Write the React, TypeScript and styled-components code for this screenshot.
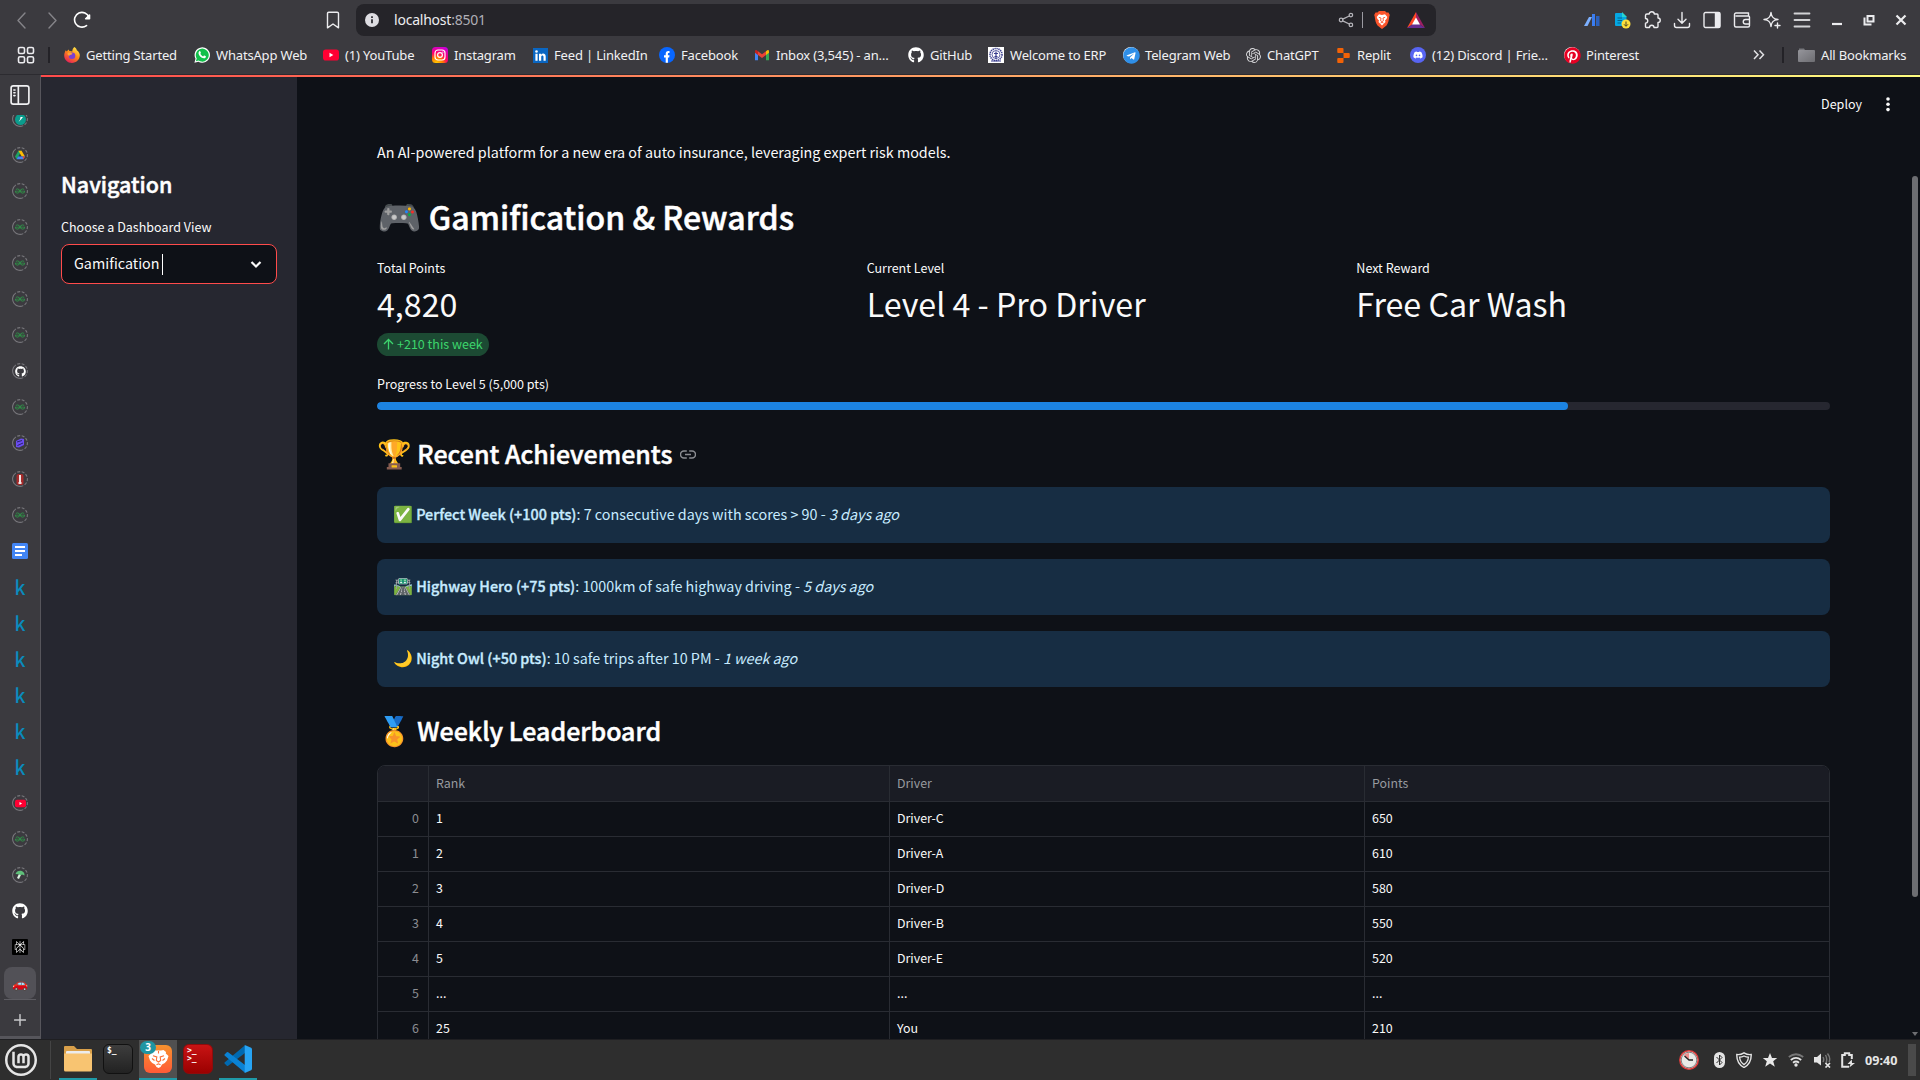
import React, { ReactNode } from 'react';
import styled, { createGlobalStyle, css } from 'styled-components';
import { SiGeeksforgeeks, SiPerplexity, SiReplit, SiOpenai, SiLinuxmint } from 'react-icons/si';
import { FaTelegram, FaDiscord, FaPinterest, FaGithub } from 'react-icons/fa';

const source = `'Noto Sans CJK SC', 'Noto Color Emoji', sans-serif`;
const ui = `'Noto Sans', sans-serif`;

const Global = createGlobalStyle`
  * { box-sizing: border-box; }
  body { margin: 0; background: #0e1117; overflow: hidden; }
  svg { display: block; flex: none; }
`;

/* ---------- shell ---------- */
const Screen = styled.div`
  width: 1920px;
  height: 1080px;
  display: grid;
  grid-template-rows: 75px 964px 41px;
  overflow: hidden;
  font-family: ${ui};
  color: #fff;
`;
const Body = styled.div`
  display: grid;
  grid-template-columns: 41px 1fr;
  min-height: 0;
`;
const Page = styled.div`
  display: grid;
  grid-template-rows: 2px 1fr;
  min-height: 0;
  background: #0e1117;
  font-family: ${source};
`;
const Decoration = styled.div`
  background: linear-gradient(90deg, #ff4b4b, #fffd80);
`;
const PageColumns = styled.div`
  display: grid;
  grid-template-columns: 256px 1fr 10px;
  min-height: 0;
`;

/* ---------- browser chrome ---------- */
const Chrome = styled.header`
  background: #3b3a3f;
  border-bottom: 1px solid #2c2b30;
  display: grid;
  grid-template-rows: 40px 30px;
`;
const NavBar = styled.div`
  display: flex;
  align-items: center;
  padding: 0 3px 0 7px;
`;
const IconCell = styled.div<{ $w?: number }>`
  width: ${p => p.$w ?? 30}px;
  height: 32px;
  display: flex;
  align-items: center;
  justify-content: center;
`;
const NavButtons = styled.div`
  display: flex;
  width: 311px;
`;
const AddressBar = styled.div`
  display: flex;
  align-items: center;
  width: 1080px;
  height: 32px;
  margin: 0 141px 0 8px;
  padding: 0 11px 0 9px;
  border-radius: 8px;
  background: #252429;
`;
const Address = styled.div`
  flex: 1;
  margin-left: 15px;
  padding-bottom: 1px;
  font-size: 14px;
  letter-spacing: -0.22px;
  color: #ededf0;
  span { color: #b0afb6; }
`;
const ShieldDivider = styled.i`
  width: 1px;
  height: 16px;
  margin: 0 11px 0 8px;
  background: #9b9aa1;
`;
const Extensions = styled.div`display: flex;`;
const WindowButtons = styled.div`display: flex; margin-left: 4px;`;

const BookmarkBar = styled.div`
  display: flex;
  align-items: center;
  padding: 0 14px 0 17px;
  font-size: 13px;
  letter-spacing: -0.17px;
  color: #f1f1f3;
  white-space: nowrap;
`;
const Bookmark = styled.div<{ $w: number }>`
  width: ${p => p.$w}px;
  display: flex;
  align-items: center;
  gap: 6px;
`;
const Separator = styled.i<{ $left: number; $right: number }>`
  width: 2px;
  height: 16px;
  margin: 0 ${p => p.$right}px 0 ${p => p.$left}px;
  background: #232227;
`;
const Grow = styled.div`flex: 1;`;

/* ---------- vertical tabs ---------- */
const TabStrip = styled.nav`
  display: flex;
  flex-direction: column;
  background: #3b3a3f;
  border-right: 1px solid #56555b;
  min-height: 0;
`;
const TabToggle = styled.div`
  height: 40px;
  display: flex;
  align-items: center;
  justify-content: center;
`;
const TabList = styled.div`
  flex: none;
  height: 884px;
  overflow: hidden;
`;
const TabStack = styled.div`margin-top: -14px;`;
const Tab = styled.div`
  height: 36px;
  display: flex;
  align-items: center;
  justify-content: center;
`;
const TabChip = styled.div`
  width: 32px;
  height: 32px;
  padding-bottom: 2px;
  border-radius: 8px;
  background: #525157;
  display: flex;
  align-items: center;
  justify-content: center;
  font: 13px ${source};
`;
const NewTab = styled.div`
  flex: 1;
  margin: 0 4px;
  padding-top: 3px;
  border-top: 1px solid #5d5c62;
  display: flex;
  align-items: center;
  justify-content: center;
`;
const StripFoot = styled.div`height: 3px; background: #56555b;`;
const RingBox = styled.div`
  display: grid;
  place-items: center;
  & > * { grid-area: 1 / 1; }
`;
const KMark = styled.span`
  font: 500 19px/20px ${source};
  color: #0a8bbd;
`;

/* ---------- app sidebar ---------- */
const Sidebar = styled.aside`
  background: #262730;
  padding: 92px 20px 0;
  display: flex;
  flex-direction: column;
`;
const heavy = css`
  font-weight: 500;
  -webkit-text-stroke: 0.5px currentColor;
`;
const SideTitle = styled.h2`
  margin: 0;
  font-size: 21.5px;
  line-height: 30px;
  ${heavy}
`;
const FieldLabel = styled.label`
  margin-top: 18px;
  font-size: 12.53px;
  line-height: 20px;
  color: #fafafa;
`;
const Select = styled.div`
  margin-top: 7px;
  height: 40px;
  padding: 0 12px;
  display: flex;
  align-items: center;
  border: 1px solid #ff4b4b;
  border-radius: 8px;
  background: #0e1117;
  font-size: 14.33px;
  line-height: 22px;
  color: #fafafa;
`;
const SelectValue = styled.span`padding-bottom: 2px;`;
const Caret = styled.i`
  width: 1px;
  height: 21px;
  margin-left: 2px;
  background: #fff;
`;

/* ---------- app content ---------- */
const Content = styled.main`
  position: relative;
  min-height: 0;
  overflow: hidden;
  padding: 63px 80px 0 80px;
  color: #fafafa;
`;
const AppToolbar = styled.div`
  position: absolute;
  top: 16px;
  right: 12px;
  display: flex;
  align-items: center;
  gap: 16px;
  font-size: 12.53px;
  line-height: 22px;
`;
const Intro = styled.p`
  margin: 0;
  font-size: 14.33px;
  line-height: 24px;
`;
const Title = styled.h2`
  margin: 30px 0 20px;
  font-size: 32.05px;
  line-height: 44px;
  color: #fff;
  ${heavy}
`;
const Subtitle = styled.h3<{ $top: number; $bottom: number }>`
  margin: ${p => p.$top}px 0 ${p => p.$bottom}px;
  height: 36px;
  display: flex;
  align-items: center;
  gap: 8px;
  font-size: 24.95px;
  line-height: 36px;
  color: #fff;
  ${heavy}
`;
const Emoji = styled.span`
  font-size: 1.118em;
  line-height: 0;
  -webkit-text-stroke: 0;
`;
const Metrics = styled.div`
  display: grid;
  grid-template-columns: repeat(3, 1fr);
  gap: 16px;
  height: 98px;
`;
const MetricLabel = styled.div`
  font-size: 12.53px;
  line-height: 20px;
`;
const MetricValue = styled.div`
  margin-top: 3px;
  font-size: 32.2px;
  line-height: 44px;
`;
const Delta = styled.div`
  margin-top: 8px;
  width: 112px;
  height: 23px;
  padding: 0 0 2px 6px;
  border-radius: 12px;
  display: flex;
  align-items: center;
  gap: 3px;
  background: #1c4a33;
  color: #3dd56d;
  font-size: 12.53px;
  line-height: 20px;
  white-space: nowrap;
`;
const ProgressLabel = styled.div`
  margin-top: 18px;
  font-size: 12.53px;
  line-height: 20px;
`;
const Track = styled.div`
  margin-top: 8px;
  height: 8px;
  border-radius: 4px;
  background: #262730;
  overflow: hidden;
`;
const Fill = styled.div<{ $value: number }>`
  width: ${p => p.$value}%;
  height: 100%;
  border-radius: 4px;
  background: #1c83e1;
`;
const Alerts = styled.div`
  display: flex;
  flex-direction: column;
  gap: 16px;
`;
const Alert = styled.div`
  height: 56px;
  padding: 15px 16px;
  border-radius: 8px;
  background: #172d43;
  color: #c7ebff;
  font-size: 14.33px;
  line-height: 24px;
  b { font-weight: 500; -webkit-text-stroke: 0.35px currentColor; letter-spacing: 0.03px; }
`;
const Grid = styled.div`
  border: 1px solid #292c33;
  border-radius: 8px 8px 0 0;
  overflow: hidden;
  font-size: 12.4px;
`;
const Row = styled.div<{ $head?: boolean }>`
  display: grid;
  grid-template-columns: 51px 461px 475px 1fr;
  height: ${p => (p.$head ? 36 : 35)}px;
  line-height: ${p => (p.$head ? 34 : 32)}px;
  border-bottom: 1px solid #292c33;
  background: ${p => (p.$head ? '#1a1c24' : 'transparent')};
  color: ${p => (p.$head ? '#989a9f' : '#fafafa')};
`;
const Cell = styled.div<{ $index?: boolean }>`
  padding: 0 9px 0 7px;
  border-right: 1px solid #292c33;
  ${p => p.$index && css`text-align: right; color: #8b8d92;`}
  &:last-child { border-right: 0; }
`;
const ScrollGutter = styled.div`
  display: flex;
  flex-direction: column;
  justify-content: space-between;
  padding: 99px 2px 3px;
`;
const Thumb = styled.div`
  width: 6px;
  height: 721px;
  border-radius: 3px;
  background: #6d6e72;
`;

/* ---------- desktop panel ---------- */
const Taskbar = styled.footer`
  display: flex;
  align-items: center;
  background: #2e2e2e;
  border-top: 1px solid #1f1f22;
  padding: 0 4px 0 4px;
`;
const PanelDivider = styled.i`
  width: 1px;
  height: 38px;
  margin: 0 8px 0 12px;
  background: #444;
`;
const Launcher = styled.div<{ $open?: boolean; $active?: boolean }>`
  width: 38px;
  height: 40px;
  margin-right: 2px;
  display: flex;
  align-items: center;
  justify-content: center;
  position: relative;
  background: ${p => (p.$active ? '#505050' : 'transparent')};
  border-bottom: 2px solid ${p => (p.$open ? '#1f9aa8' : 'transparent')};
`;
const CountBadge = styled.span`
  position: absolute;
  left: 1px;
  top: 1px;
  width: 16px;
  height: 13px;
  border-radius: 7px;
  background: #1f95a3;
  font: 700 10px/13px ${ui};
  text-align: center;
`;
const Terminal = styled.div<{ $red?: boolean }>`
  width: 30px;
  height: 30px;
  padding: 2px 3px;
  border-radius: 6px;
  border: 1px solid ${p => (p.$red ? '#8f0b0b' : '#111')};
  background: ${p => (p.$red ? 'linear-gradient(#c81414, #9b0000)' : 'linear-gradient(#3d3d3d, #222)')};
  font: 700 8px/8px 'DejaVu Sans Mono', monospace;
  color: #fff;
  white-space: pre;
`;
const BraveTile = styled.div`
  width: 28px;
  height: 28px;
  border-radius: 6px;
  display: flex;
  align-items: center;
  justify-content: center;
  background: linear-gradient(#f7922e, #ff5a36);
`;
const Tray = styled.div`
  display: flex;
  align-items: center;
`;
const TrayItem = styled.div<{ $w: number }>`
  width: ${p => p.$w}px;
  display: flex;
  justify-content: center;
`;
const Clock = styled.div`
  width: 47px;
  padding-left: 4px;
  font-size: 12.6px;
  font-weight: 700;
  color: #e6e6e6;
`;
const ShowDesktop = styled.div`
  width: 8px;
  height: 32px;
  background: #4a4a4a;
`;

/* ---------- drawings ---------- */
type LineProps = { size?: number; color?: string; width?: number; children: ReactNode };
const Line = ({ size = 18, color = '#ececef', width = 1.4, children }: LineProps) => (
  <svg width={size} height={size} viewBox="0 0 18 18" fill="none" stroke={color} strokeWidth={width} strokeLinecap="round" strokeLinejoin="round">{children}</svg>
);

const Firefox = () => (
  <svg width="16" height="16" viewBox="0 0 16 16">
    <defs>
      <linearGradient id="ff" x1="0.8" y1="0" x2="0.2" y2="1"><stop offset="0" stopColor="#fff04d" /><stop offset=".45" stopColor="#ff8a16" /><stop offset="1" stopColor="#e3175f" /></linearGradient>
    </defs>
    <path d="M10.3 0C12 1 12.5 2 12.8 3.2 14.8 4.5 15.9 6.5 15.8 8.6 15.6 13 12.2 16 8 16 3.6 16 .2 12.7.2 8.5.2 6.5 1 4.7 1.8 3.3L2.8 4.6C3.2 3.6 3.8 3 4.7 2.4L5.4 4.1C6.5 4 7.5 4.2 8.3 4.6 8.3 2.9 9 1.2 10.3 0Z" fill="url(#ff)" />
    <circle cx="8" cy="8.7" r="3.3" fill="#7a3fd1" />
    <path d="M3.6 6C5.5 5 7 5.7 8.6 6.7 7.6 7.9 5.6 7.5 5.3 8.8 3.9 8.5 3.3 7.3 3.6 6Z" fill="#ffa436" />
  </svg>
);
const WhatsApp = () => (
  <svg width="16" height="16" viewBox="0 0 16 16">
    <path d="M.4 15.7 1.5 11.7A7.7 7.7 0 1 1 4.4 14.7Z" fill="#fff" />
    <path d="M1.9 14.2 2.7 11.5A6.5 6.5 0 1 1 4.6 13.5Z" fill="#12c04b" />
    <path d="M5.3 4.2C5.8 3.8 6.2 4 6.4 4.5L6.9 5.7C7 6 6.5 6.6 6.3 6.8 6.9 8 7.9 8.9 9.2 9.4L9.9 8.6C10.1 8.4 10.3 8.4 10.5 8.5L11.9 9.2C12 10.6 11 11.4 9.9 11.3 7.3 11 4.6 8.5 4.5 6 4.5 5.2 4.9 4.5 5.3 4.2Z" fill="#fff" />
  </svg>
);
const YouTube = ({ size = 16 }: { size?: number }) => (
  <svg width={size} height={size} viewBox="0 0 16 16"><rect y="2.5" width="16" height="11" rx="2.8" fill="#ff0033" /><path d="M6.5 5.8 10.3 8 6.5 10.2Z" fill="#fff" /></svg>
);
const Instagram = () => (
  <svg width="16" height="16" viewBox="0 0 16 16">
    <defs>
      <radialGradient id="ig" cx=".28" cy="1.05" r="1.15"><stop offset="0" stopColor="#ffd600" /><stop offset=".35" stopColor="#ff7a00" /><stop offset=".6" stopColor="#ff0069" /><stop offset="1" stopColor="#c800e0" /></radialGradient>
    </defs>
    <rect width="16" height="16" rx="3.5" fill="url(#ig)" />
    <g fill="none" stroke="#fff" strokeWidth="1.2"><rect x="3" y="3" width="10" height="10" rx="3" /><circle cx="8" cy="8" r="2.4" /></g>
    <circle cx="10.9" cy="5.1" r=".7" fill="#fff" />
  </svg>
);
const LinkedIn = () => (
  <svg width="15" height="15" viewBox="0 0 15 15"><path fill="#0a66c2" d="M0 0H15V15H0Z" /><g fill="#fff"><circle cx="3.5" cy="3.5" r="1.3" /><path d="M2.4 5.7H4.6V12.8H2.4ZM6 5.7H8.1V6.7C9.2 5 12.7 5.1 12.7 8.5V12.8H10.5V9C10.5 6.9 8.2 7 8.2 9V12.8H6Z" /></g></svg>
);
const Facebook = () => (
  <svg width="16" height="16" viewBox="0 0 16 16"><circle cx="8" cy="8" r="8" fill="#0866ff" /><path d="M6.7 15.8V10.5H5V8.2H6.7V7C6.7 4.7 7.8 3.6 10.5 4V6C9.1 5.9 8.9 6.2 8.9 7.2V8.2H10.5L10.2 10.5H8.9V15.8Z" fill="#fff" /></svg>
);
const Gmail = () => (
  <svg width="16" height="16" viewBox="0 0 16 16">
    <path d="M1 5V13.3H4V7.2Z" fill="#4285f4" /><path d="M15 5V13.3H12V7.2Z" fill="#34a853" /><path d="M12 4.2 13.2 3.3Q15 2.5 15 4.5V5.8L12 8Z" fill="#fbbc04" /><path d="M4 4.2 8 7.2 12 4.2V8L8 11 4 8Z" fill="#ea4335" /><path d="M4 4.2 2.8 3.3Q1 2.5 1 4.5V5.8L4 8Z" fill="#c5221f" />
  </svg>
);
const Erp = () => (
  <svg width="16" height="16" viewBox="0 0 16 16"><path fill="#fff" d="M0 0H16V16H0Z" /><g fill="none" stroke="#3b3f8f"><circle cx="8" cy="7.5" r="6" strokeWidth="1.6" strokeDasharray="1.3 .7" /><circle cx="8" cy="7.5" r="4" strokeWidth=".8" /><path d="M8 4.5V12M6 6.5H10M6.5 9.5H9.5M3 14H13" strokeWidth="1.2" /></g></svg>
);
const Round = styled.span<{ $fg: string; $bg: string }>`
  display: grid;
  place-items: center;
  width: 16px;
  height: 16px;
  border-radius: 50%;
  background: ${p => p.$bg};
  color: ${p => p.$fg};
`;
const Folder = () => (
  <svg width="17" height="15" viewBox="0 0 17 15"><defs><linearGradient id="fd" x2="1" y2="1"><stop stopColor="#95959b" /><stop offset="1" stopColor="#6d6d72" /></linearGradient></defs><path d="M1 .5H6L7 2H16V4H1Z" fill="#77777c" /><rect y="2" width="17" height="12" rx="1" fill="url(#fd)" /></svg>
);
const BraveLogo = () => (
  <svg width="16" height="18" viewBox="0 0 16 18"><path d="M5 0H11L12.5 1.6 14.5 1.5 15.8 4 15.3 5.6C15 9 14 13 12.5 14.5L8 18 3.5 14.5C2 13 1 9 .7 5.6L.2 4 1.5 1.5 3.5 1.6Z" fill="#fb542b" /><path d="M5 3.3 8 4 11 3.3 13.3 6 12.5 8 11 9.5 11.5 11 8 14.5 4.5 11 5 9.5 3.5 8 2.7 6Z" fill="#fff" /><path d="M4.8 6.3 7 7 6.6 9.8 8 10.6 9.4 9.8 9 7 11.2 6.3M6.5 12 8 11.4 9.5 12" fill="none" stroke="#fb542b" strokeWidth=".9" /></svg>
);
const LionHead = () => (
  <svg width="21" height="20" viewBox="0 0 21 20"><path d="M5.5 1 8 1.6H13L15.500 1 18 3 17.800 4.500 20.500 7 19 11.500 16.800 14 14 15.500 12.500 18 10.500 19 8.500 18 7 15.500 4.200 14 2 11.500.5 7 3.200 4.500 3 3Z" fill="#fff" /><path d="M5 6.800 8.800 8 8.300 11.500 10.500 13 12.700 11.500 12.200 8 16 6.800M8.500 15.800 10.500 14.800 12.500 15.800M4 9.500 6.500 11.500M17 9.500 14.500 11.500M10.500 2V4.500" fill="none" stroke="#fb6f35" strokeWidth="1.100" /></svg>
);
const Bat = () => (
  <svg width="18" height="16" viewBox="0 0 18 16"><path d="M9 0 0 16 9 10Z" fill="#ff4724" /><path d="M9 0 18 16 9 10Z" fill="#9e1f63" /><path d="M0 16H18L9 10Z" fill="#662d91" /><path d="M9 5.5 13 12.5H5Z" fill="#fff" /></svg>
);
const Drive = () => (
  <svg width="10" height="10" viewBox="0 0 10 10"><path d="M3.4.8H6.6L3.3 6.5 1.7 9.2 0 6.5Z" fill="#1ea362" /><path d="M3.4.8H6.6L10 6.5H6.7Z" fill="#fbbc04" /><path d="M3 6.5H10L8.4 9.2H1.6Z" fill="#4285f4" /><path d="M7.5 6.5H10L8.4 9.2Z" fill="#ea4335" /></svg>
);
const Docs = () => (
  <svg width="16" height="16" viewBox="0 0 16 16"><rect width="16" height="16" rx="1.5" fill="#4285f4" /><path d="M3 4H13M3 8H13M3 12H10" stroke="#fff" strokeWidth="2" /></svg>
);
const Ring = ({ children }: { children: ReactNode }) => (
  <RingBox>
    <svg width="16" height="16" viewBox="0 0 16 16"><circle cx="8" cy="8" r="7.4" fill="none" stroke="#77767b" strokeWidth="1.1" strokeDasharray="17.5 1.5 3 1.5 3 1.5 3 1.5 3 1.5 3 1.5 5" transform="rotate(100 8 8)" /></svg>
    {children}
  </RingBox>
);
const Gfg = () => <Ring><SiGeeksforgeeks size={10} color="#2f9147" /></Ring>;

const VsCode = () => (
  <svg width="28" height="28" viewBox="0 0 100 100">
    <path d="M2 66 10 74Q12 76 15 74L75 29V1L3 62Q0 64 2 66Z" fill="#0069b0" />
    <path d="M2 34 10 26Q12 24 15 26L75 71V99L3 38Q0 36 2 34Z" fill="#0a82d4" />
    <path d="M74 0 97 10Q100 12 100 15V85Q100 88 97 90L74 100Z" fill="#27a4f3" />
  </svg>
);
const Files = () => (
  <svg width="28" height="26" viewBox="0 0 28 26"><path d="M0 1Q0 0 1 0H10L13 3H27Q28 3 28 4V20H0Z" fill="#d9a04a" /><rect x="2" y="5" width="24" height="5" rx="1" fill="#ececec" /><path d="M0 7.5H28V24Q28 25.5 26.5 25.5H1.5Q0 25.5 0 24Z" fill="#f8c471" /></svg>
);

/* ---------- data ---------- */
const bookmarks: { icon: ReactNode; text: string; w: number }[] = [
  { icon: <Firefox />, text: 'Getting Started', w: 130 },
  { icon: <WhatsApp />, text: 'WhatsApp Web', w: 129 },
  { icon: <YouTube />, text: '(1) YouTube', w: 109 },
  { icon: <Instagram />, text: 'Instagram', w: 101 },
  { icon: <LinkedIn />, text: 'Feed | LinkedIn', w: 126 },
  { icon: <Facebook />, text: 'Facebook', w: 95 },
  { icon: <Gmail />, text: 'Inbox (3,545) - an…', w: 154 },
  { icon: <FaGithub size={16} color="#fff" />, text: 'GitHub', w: 80 },
  { icon: <Erp />, text: 'Welcome to ERP', w: 135 },
  { icon: <Round $fg="#2f8fe8" $bg="#fff"><FaTelegram size={17} /></Round>, text: 'Telegram Web', w: 123 },
  { icon: <SiOpenai size={15} color="#d6d6d9" />, text: 'ChatGPT', w: 90 },
  { icon: <SiReplit size={15} color="#f26207" />, text: 'Replit', w: 74 },
  { icon: <Round $fg="#fff" $bg="#5865f2"><FaDiscord size={10} /></Round>, text: '(12) Discord | Frie…', w: 154 },
  { icon: <Round $fg="#e60023" $bg="#fff"><FaPinterest size={17} /></Round>, text: 'Pinterest', w: 90 },
];
const tabs: ReactNode[] = [
  <Ring><svg width="11" height="11" viewBox="0 0 11 11"><circle cx="5.5" cy="5.5" r="5.5" fill="#0b9c8d" /><path d="M3.5 8 5 5.5 5.5 3H8L6 5.5Z" fill="#fff" /></svg></Ring>,
  <Ring><Drive /></Ring>,
  <Gfg />, <Gfg />, <Gfg />, <Gfg />, <Gfg />,
  <Ring><FaGithub size={11} color="#fff" /></Ring>,
  <Gfg />,
  <Ring><svg width="10" height="10" viewBox="0 0 10 10"><path d="M1 3 6 .5 9 1 9 7 4 9.5 1 9Z" fill="#6a4df0" /><path d="M2 4 7 2.5M2.5 7.5 8 5" stroke="#2b2270" strokeWidth="1" /></svg></Ring>,
  <Ring><svg width="8" height="11" viewBox="0 0 8 11"><rect x=".5" width="7" height="11" rx="2" fill="#a52a2a" /><path d="M3 1H5V8H3ZM2.5 8H5.5V10H2.5Z" fill="#f0e6e6" /></svg></Ring>,
  <Gfg />,
  <Docs />,
  ...Array.from({ length: 6 }, () => <KMark>k</KMark>),
  <Ring><YouTube size={11} /></Ring>,
  <Gfg />,
  <Ring><svg width="10" height="10" viewBox="0 0 10 10"><path d="M.5 4Q2 .3 6 .8 9.8 2 9.5 5.5L7 4.500 5.500 5.500 3.5 4.200Z" fill="#5fc07a" /><path d="M4.8 4.800 3 8.500" stroke="#dff3e4" strokeWidth="2.200" /></svg></Ring>,
  <FaGithub size={16} color="#fff" />,
  <svg width="16" height="16" viewBox="0 0 16 16"><rect width="16" height="16" rx="1" fill="#000" /><SiPerplexity x={2} y={2} size={12} color="#fff" /></svg>,
  <TabChip>🚗</TabChip>,
];
const metrics = [
  { label: 'Total Points', value: '4,820', delta: '+210 this week' },
  { label: 'Current Level', value: 'Level 4 - Pro Driver' },
  { label: 'Next Reward', value: 'Free Car Wash' },
];
const alerts = [
  { emoji: '✅', title: 'Perfect Week (+100 pts)', text: '7 consecutive days with scores > 90', when: '3 days ago' },
  { emoji: '🛣️', title: 'Highway Hero (+75 pts)', text: '1000km of safe highway driving', when: '5 days ago' },
  { emoji: '🌙', title: 'Night Owl (+50 pts)', text: '10 safe trips after 10 PM', when: '1 week ago' },
];
const rows = [
  ['1', 'Driver-C', '650'], ['2', 'Driver-A', '610'], ['3', 'Driver-D', '580'], ['4', 'Driver-B', '550'],
  ['5', 'Driver-E', '520'], ['...', '...', '...'], ['25', 'You', '210'],
];

const BrowserChrome = () => (
  <Chrome>
    <NavBar>
      <NavButtons>
        <IconCell><Line color="#858489"><path d="M12 2 5 9.5 12 17" /></Line></IconCell>
        <IconCell><Line color="#858489"><path d="M6 2 13 9.5 6 17" /></Line></IconCell>
        <IconCell><Line color="#fff" width={1.6}><path d="M13.500 14.600A7.4 7.4 0 1 1 16 6.500" /><path d="M16.500 4V7.800H12.700Z" fill="#fff" /></Line></IconCell>
      </NavButtons>
      <IconCell><Line><path d="M3.5 2.5Q3.5 1.2 4.8 1.2H13.2Q14.5 1.2 14.5 2.5V16.8L9 13 3.5 16.8Z" /></Line></IconCell>
      <AddressBar>
        <svg width="14" height="14" viewBox="0 0 14 14"><circle cx="7" cy="7" r="7" fill="#dedde2" /><path d="M7 6.3V10.3M7 3.3V4.9" stroke="#252429" strokeWidth="1.7" /></svg>
        <Address>localhost<span>:8501</span></Address>
        <Line size={16} color="#b5b4ba"><circle cx="14.5" cy="3.5" r="2" /><circle cx="14.5" cy="14.5" r="2" /><circle cx="3.5" cy="9" r="2" /><path d="M5.3 8 12.7 4.5M5.3 10 12.7 13.5" /></Line>
        <ShieldDivider />
        <BraveLogo />
        <IconCell $w={17} />
        <Bat />
      </AddressBar>
      <Extensions>
        <IconCell><svg width="17" height="14" viewBox="0 0 17 14"><path d="M0 13 5 4H8L3.5 13Z" fill="#7db0ff" /><path d="M8 1H11V13H8Z" fill="#3a7cf0" /><path d="M12 3H15.5V13H12Z" fill="#2b60bd" /></svg></IconCell>
        <IconCell><svg width="17" height="17" viewBox="0 0 17 17"><path d="M1 2Q1 1 2 1H8L12.5 5V14H2Q1 14 1 13Z" fill="#05a7e3" /><path d="M3.5 6H8M3.5 8.5H8M3.5 11H7" stroke="#05638a" /><path d="M8 0 13 5H8Z" fill="#27d5d0" /><circle cx="12" cy="12" r="4.5" fill="#ffe03b" /><path d="M12 9.5V14M10 12.3 12 14.3 14 12.3" stroke="#4a4520" fill="none" /></svg></IconCell>
        <IconCell><Line><path d="M4 3H6.200C6.200 0 11.300 0 11.300 3H14Q15 3 15 4V7C18 7 18 11.500 15 11.500V15.500Q15 16.500 14 16.500H11C11 13.500 6.500 13.500 6.500 16.500H3.500Q2.500 16.500 2.500 15.500V12.200C5.500 12.200 5.500 7.500 2.500 7.500V4.500Q2.500 3 4 3Z" /></Line></IconCell>
        <IconCell><Line><path d="M9 1.5V12M5 8.3 9 12.3 13 8.3M1.5 12.5V14.5Q1.5 16.5 3.5 16.5H14.5Q16.5 16.5 16.5 14.5V12.5" /></Line></IconCell>
        <IconCell><Line><rect x="1" y="1.5" width="16" height="15" rx="1.5" /><path d="M12.5 2H16.5V16H12.5Z" fill="#ececef" /></Line></IconCell>
        <IconCell><Line><path d="M15.5 5V2H3Q1.5 2 1.5 3.5V14.5Q1.5 16 3 16H15Q16.5 16 16.5 14.5V6Q16.5 5 15.5 5H3M16.5 8.5H12.5A2.2 2.2 0 0 0 12.5 13H16.5" /></Line></IconCell>
        <IconCell><Line><path d="M8 1.5C8.5 6 10 8 15 8.5 10 9 8.5 11 8 15.5 7.5 11 6 9 1 8.5 6 8 7.5 6 8 1.5Z" /><path d="M14.5 12V17M12 14.5H17" /></Line></IconCell>
        <IconCell><Line color="#d2d2d5" width={1.8}><path d="M1.5 2.5H16.5M1.5 9H16.5M1.5 15.5H16.5" /></Line></IconCell>
      </Extensions>
      <WindowButtons>
        <IconCell $w={32}><Line width={2.2}><path strokeLinecap="butt" d="M4 13H14" /></Line></IconCell>
        <IconCell $w={32}><Line width={2}><path strokeLinejoin="miter" d="M7.5 5H13.5V10.5H7.5Z" /><path strokeLinejoin="miter" strokeLinecap="butt" d="M4.5 6.5V13.5H11.5" /></Line></IconCell>
        <IconCell $w={32}><Line width={2.2}><path strokeLinecap="butt" d="M4.5 4.5 13.5 13.5M13.5 4.5 4.5 13.5" /></Line></IconCell>
      </WindowButtons>
    </NavBar>
    <BookmarkBar>
      <Line width={1.6}><rect x="1.500" y="1.5" width="6" height="6" rx="1.5" /><rect x="10.500" y="1.5" width="6" height="6" rx="1.5" /><rect x="1.500" y="10.8" width="6" height="6" rx="1.5" /><rect x="10.500" y="10.8" width="6" height="6" rx="1.5" /></Line>
      <Separator $left={13} $right={14} />
      {bookmarks.map(b => <Bookmark key={b.text} $w={b.w}>{b.icon}{b.text}</Bookmark>)}
      <Grow />
      <svg width="12" height="12" viewBox="0 0 12 12" fill="none" stroke="#e2e2e5" strokeWidth="1.5"><path d="M1 1.5 5 5.8 1 10M6.5 1.5 10.5 5.8 6.5 10" /></svg>
      <Separator $left={17} $right={14} />
      <Bookmark $w={108}><Folder />All Bookmarks</Bookmark>
    </BookmarkBar>
  </Chrome>
);

const VerticalTabs = () => (
  <TabStrip>
    <TabToggle>
      <Line size={20} color="#f1f1f3" width={1.5}><rect x="1" y="0.800" width="16" height="16.400" rx="2" /><path d="M7.5 1.5V16.5M3.5 4.5H4.500M3.5 7H4.500M3.5 9.5H4.500" /></Line>
    </TabToggle>
    <TabList><TabStack>{tabs.map((t, i) => <Tab key={i}>{t}</Tab>)}</TabStack></TabList>
    <NewTab><Line size={12} width={2.2} color="#c9c9cc"><path d="M9 1V17M1 9H17" /></Line></NewTab>
    <StripFoot />
  </TabStrip>
);

const Dashboard = () => (
  <Content>
    <AppToolbar>
      Deploy
      <svg width="20" height="16" viewBox="0 0 20 16" fill="#fafafa"><circle cx="10" cy="3" r="1.8" /><circle cx="10" cy="8.3" r="1.8" /><circle cx="10" cy="13.6" r="1.8" /></svg>
    </AppToolbar>
    <Intro>An AI-powered platform for a new era of auto insurance, leveraging expert risk models.</Intro>
    <Title><Emoji>🎮</Emoji> Gamification &amp; Rewards</Title>
    <Metrics>
      {metrics.map(m => (
        <div key={m.label}>
          <MetricLabel>{m.label}</MetricLabel>
          <MetricValue>{m.value}</MetricValue>
          {m.delta && (
            <Delta>
              <svg width="11" height="12" viewBox="0 0 11 12" fill="none" stroke="#3dd56d" strokeWidth="1.3"><path d="M5.5 11.5V1.5M1 6 5.5 1.5 10 6" /></svg>
              {m.delta}
            </Delta>
          )}
        </div>
      ))}
    </Metrics>
    <ProgressLabel>Progress to Level 5 (5,000 pts)</ProgressLabel>
    <Track><Fill $value={82} /></Track>
    <Subtitle $top={25} $bottom={16}>
      <span><Emoji>🏆</Emoji> Recent Achievements</span>
      <svg width="16" height="18" viewBox="0 0 16 18" fill="none" stroke="#8b8d92" strokeWidth="1.5"><path d="M6.8 7H4A3 3 0 0 0 4 14H6.8M9.2 7H12A3 3 0 0 1 12 14H9.2M5 10.5H11" /></svg>
    </Subtitle>
    <Alerts>
      {alerts.map(a => (
        <Alert key={a.title}><Emoji>{a.emoji}</Emoji> <b>{a.title}</b>: {a.text} - <i>{a.when}</i></Alert>
      ))}
    </Alerts>
    <Subtitle $top={25} $bottom={17}><span><Emoji>🏅</Emoji> Weekly Leaderboard</span></Subtitle>
    <Grid>
      <Row $head><Cell $index /><Cell>Rank</Cell><Cell>Driver</Cell><Cell>Points</Cell></Row>
      {rows.map((r, i) => (
        <Row key={i}><Cell $index>{i}</Cell>{r.map((v, j) => <Cell key={j}>{v}</Cell>)}</Row>
      ))}
    </Grid>
  </Content>
);

const Panel = () => (
  <Taskbar>
    <IconCell $w={34}><SiLinuxmint size={32} color="#e6e6e6" /></IconCell>
    <PanelDivider />
    <Launcher $open><Files /></Launcher>
    <Launcher><Terminal>$_</Terminal></Launcher>
    <Launcher $open $active><BraveTile><LionHead /></BraveTile><CountBadge>3</CountBadge></Launcher>
    <Launcher><Terminal $red>{'>_\n>_'}</Terminal></Launcher>
    <Launcher $open><VsCode /></Launcher>
    <Grow />
    <Tray>
      <TrayItem $w={36}><svg width="20" height="20" viewBox="0 0 20 20"><circle cx="10" cy="10" r="9.2" fill="#e9e9e6" stroke="#e03c3c" strokeWidth="1.5" /><circle cx="10" cy="10" r="7.8" fill="none" stroke="#666" strokeWidth=".8" /><path d="M10 10 5 5A7 7 0 0 1 10 3Z" fill="#ef8f8f" /><path d="M5.5 6 10 10H14" fill="none" stroke="#222" strokeWidth="1.3" /></svg></TrayItem>
      <TrayItem $w={24}><svg width="11" height="16" viewBox="0 0 11 16"><rect width="11" height="16" rx="5.5" fill="#e4e4e4" /><path d="M2.5 5 8 10.5 5.5 13V3L8 5.5 2.5 11" fill="none" stroke="#2e2e2e" /></svg></TrayItem>
      <TrayItem $w={25}><svg width="16" height="16" viewBox="0 0 16 16"><path d="M8 .8Q11.5 3 15.2 2.5 15.500 11.5 8 15.5 .5 11.5 .8 2.5 4.5 3 8 .8Z" fill="none" stroke="#e4e4e4" strokeWidth="1.4" /><path d="M8 4Q10.500 5.300 12.400 5.200 12 10 8 12.600 4 10 3.600 5.200 5.500 5.300 8 4Z" fill="none" stroke="#e4e4e4" strokeWidth="1.300" /></svg></TrayItem>
      <TrayItem $w={27}><svg width="16" height="16" viewBox="0 0 16 16"><path d="M8 1 10 6H15.2L11.2 9.3 12.8 14.8 8 11.5 3.2 14.8 4.8 9.3.8 6H6Z" fill="#e8e8e8" /></svg></TrayItem>
      <TrayItem $w={26}><svg width="16" height="14" viewBox="0 0 16 14" fill="none" strokeWidth="1.8"><path d="M.8 4Q8-1.5 15.2 4" stroke="#777" /><path d="M2.8 7Q8 2.8 13.2 7M5 9.7Q8 7.3 11 9.7" stroke="#e4e4e4" /><circle cx="8" cy="12" r="1.7" fill="#e4e4e4" stroke="none" /></svg></TrayItem>
      <TrayItem $w={26}><svg width="17" height="16" viewBox="0 0 17 16"><path d="M0 5H3L7 1.5V13.5L3 10.5H0Z" fill="#e4e4e4" /><path d="M9 5Q10.5 7.5 9 10M11.5 3Q14 7.5 11.5 12M13.5 1.5Q17 6 15 10" fill="none" stroke="#777" strokeWidth="1.4" /><path d="M11.5 11 16 15.5M16 11 11.5 15.5" stroke="#e4e4e4" strokeWidth="1.7" /></svg></TrayItem>
      <TrayItem $w={26}><svg width="14" height="16" viewBox="0 0 14 16"><path d="M8 14.8H1.2V3H3.8V1.2H8.2V3H10.8V7" fill="none" stroke="#e4e4e4" strokeWidth="2" /><path d="M10.8 7.5 6.5 12H9.5L8.3 15.5 14 11H11Z" fill="#e4e4e4" /></svg></TrayItem>
      <Clock>09:40</Clock>
      <ShowDesktop />
    </Tray>
  </Taskbar>
);

export default function App() {
  return (
    <>
      <Global />
      <Screen>
        <BrowserChrome />
        <Body>
          <VerticalTabs />
          <Page>
            <Decoration />
            <PageColumns>
              <Sidebar>
                <SideTitle>Navigation</SideTitle>
                <FieldLabel>Choose a Dashboard View</FieldLabel>
                <Select>
                  <SelectValue>Gamification</SelectValue>
                  <Caret />
                  <Grow />
                  <svg width="16" height="12" viewBox="0 0 16 12" fill="none" stroke="#fafafa" strokeWidth="2.2"><path d="M3.5 4 8 8.5 12.5 4" /></svg>
                </Select>
              </Sidebar>
              <Dashboard />
              <ScrollGutter>
                <Thumb />
                <svg width="6" height="4" viewBox="0 0 6 4"><path d="M0 0H6L3 4Z" fill="#6d6e72" /></svg>
              </ScrollGutter>
            </PageColumns>
          </Page>
        </Body>
        <Panel />
      </Screen>
    </>
  );
}
